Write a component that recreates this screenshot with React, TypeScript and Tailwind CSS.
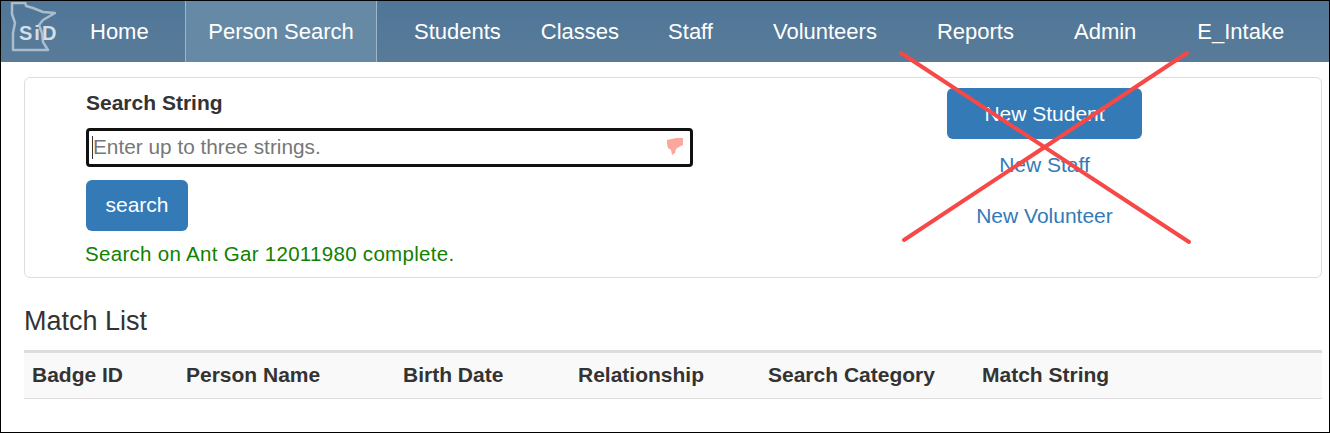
const navItems = [
  { label: "Home", className: "ml-[34px] w-[95px] pr-[37px]" },
  { label: "Person Search", className: "w-[192px] px-[22px] justify-center bg-[#668aa6] border-x border-[#9db5c8]" },
  { label: "Students", className: "ml-[37px]" },
  { label: "Classes", className: "ml-[40px]" },
  { label: "Staff", className: "ml-[49px]" },
  { label: "Volunteers", className: "ml-[60px]" },
  { label: "Reports", className: "ml-[60px]" },
  { label: "Admin", className: "ml-[60px]" },
  { label: "E_Intake", className: "ml-[61px]" },
];

const columns = [
  { label: "Badge ID", className: "w-[162px] pl-2" },
  { label: "Person Name", className: "w-[217px]" },
  { label: "Birth Date", className: "w-[175px]" },
  { label: "Relationship", className: "w-[190px]" },
  { label: "Search Category", className: "w-[214px]" },
  { label: "Match String", className: "flex-1" },
];

function Logo() {
  return (
    <div className="relative mt-px h-[52px] w-[46px] shrink-0 self-start">
      <svg viewBox="0 0 46 52" className="h-full w-full" fill="none">
        <path
          d="M2 1 L14 1 L15 0 L16 4 L23 6 L33 10 L45 11 L33 18 L29 23 L32 31 L33 40 L38 48 L3 48 L3 31 L5 21 L2 12 Z"
          stroke="#a9bdcd"
          strokeWidth="2.5"
          strokeLinejoin="round"
        />
      </svg>
      <span className="absolute left-[9px] top-[21px] text-[20px] leading-[20px] font-bold tracking-[2px] text-[#d3dee6]">
        SiD
      </span>
    </div>
  );
}

export default function App() {
  return (
    <div className="relative h-[433px] w-[1330px] overflow-hidden border border-black bg-white font-['Liberation_Sans',Arial,sans-serif] text-[#333]">
      {/* nav bar */}
      <nav className="flex h-[61px] items-stretch bg-gradient-to-b from-[#4f7698] to-[#597b98] pl-[9px] text-[22px] text-white">
        <Logo />
        {navItems.map((item) => (
          <a key={item.label} className={`flex items-center ${item.className}`}>
            {item.label}
          </a>
        ))}
      </nav>

      <main className="pl-[23px] pr-[7px] pt-[15px]">
        {/* search panel */}
        <section className="flex h-[201px] rounded-[6px] border border-[#ddd]">
          <div className="w-[668px] pl-[61px] pt-[13px]">
            <label className="block text-[21px] leading-[24px] font-bold">Search String</label>
            <div className="relative mt-[13px] h-[39px] w-[607px]">
              <input
                placeholder="Enter up to three strings."
                className="h-full w-full rounded-[4px] border-[3px] border-[#111] pb-[2px] pl-[4px] text-[20.8px] outline-none placeholder:text-[#777]"
              />
              <span className="absolute left-[6px] top-[8px] h-[23px] w-px bg-[#333]" />
              <svg viewBox="0 0 18 18" className="absolute right-[9px] top-[9px] h-[18px] w-[18px]">
                <path d="M1 3 L10 1 L17 1 L17 8 L13 10 L10 12 L9 16 L6 18 L5 13 L2 11 L1 7 Z" fill="#fba79e" />
              </svg>
            </div>
            <button className="mt-[13px] h-[51px] w-[102px] rounded-[6px] bg-[#337ab7] pb-[2px] text-[21px] text-white">
              search
            </button>
            <p className="-ml-px mt-[11px] text-[20.5px] leading-[24px] tracking-[0.3px] text-[#128000]">
              Search on Ant Gar 12011980 complete.
            </p>
          </div>
          <div className="ml-[254px] flex w-[195px] flex-col items-center pt-[10px]">
            <button className="h-[51px] w-full rounded-[6px] bg-[#337ab7] pt-[1px] text-[21px] text-white">
              New Student
            </button>
            <a className="mt-[13px] text-[21px] leading-[25px] text-[#337ab7]">New Staff</a>
            <a className="mt-[26px] text-[21px] leading-[25px] text-[#337ab7]">New Volunteer</a>
          </div>
        </section>

        <h3 className="mt-[26px] text-[27px] leading-[34px]">Match List</h3>

        {/* results table header */}
        <div className="mt-[12px] flex h-[49px] items-center border-t-[3px] border-b border-t-[#ddd] border-b-[#ddd] bg-[#f9f9f9] pb-[2px] text-[21px] font-bold">
          {columns.map((col) => (
            <div key={col.label} className={col.className}>
              {col.label}
            </div>
          ))}
        </div>
      </main>

      {/* scan artefact where the side border breaks under the nav */}
      <span className="absolute -left-px top-[61px] h-[6px] w-px bg-white" />

      {/* red cross drawn over the panel */}
      <svg className="pointer-events-none absolute -left-px -top-px h-[433px] w-[1330px]" viewBox="0 0 1330 433">
        <line x1="901" y1="53" x2="1189" y2="242" stroke="#f74848" strokeWidth="4" strokeLinecap="round" />
        <line x1="904" y1="240" x2="1187" y2="53" stroke="#f74848" strokeWidth="4" strokeLinecap="round" />
      </svg>
    </div>
  );
}
